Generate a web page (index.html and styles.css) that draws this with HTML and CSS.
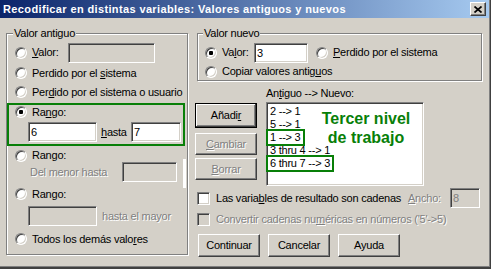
FILE: index.html
```html
<!DOCTYPE html>
<html lang="es">
<head>
<meta charset="utf-8">
<title>Recodificar en distintas variables</title>
<link rel="stylesheet" href="styles.css">
</head>
<body>
<div class="window">
  <div class="titlebar">
    <span class="title">Recodificar en distintas variables: Valores antiguos y nuevos</span>
    <span class="close"><svg width="8" height="7" viewBox="0 0 8 7"><path d="M0.5 0.5 L7.5 6.5 M7.5 0.5 L0.5 6.5" stroke="#000" stroke-width="1.7" fill="none"/></svg></span>
  </div>
  <div class="client">
    <div class="group old">
      <div class="legend">Valor antiguo</div>
      <div class="row r-valor"><span class="radio"></span><span class="lbl w36"><u>V</u>alor:</span><span class="tb dis w87"></span></div>
      <div class="row r-sys"><span class="radio"></span><span class="lbl">Perdido por el <u>s</u>istema</span></div>
      <div class="row r-usr"><span class="radio"></span><span class="lbl">Per<u>d</u>ido por el sistema o usuario</span></div>
      <div class="hl-box">
        <div class="row r-rango"><span class="radio on"></span><span class="lbl">Ra<u>n</u>go:</span></div>
        <div class="row r-range-in"><span class="tb w69 ml19">6</span><span class="hasta"><u>h</u>asta</span><span class="tb w50">7</span></div>
      </div>
      <div class="row r-rango2"><span class="radio"></span><span class="lbl">Rango:</span></div>
      <div class="row r-menor"><span class="dis-text menor">Del menor hasta</span><span class="tb dis w55"></span><span class="scrollmark"></span></div>
      <div class="row r-rango3"><span class="radio"></span><span class="lbl">Ran<u>g</u>o:</span></div>
      <div class="row r-mayor"><span class="tb dis w69 ml21"></span><span class="dis-text mayor">hasta el mayor</span></div>
      <div class="row r-todos"><span class="radio"></span><span class="lbl">Todos los demás valo<u>r</u>es</span></div>
    </div>
    <div class="right">
      <div class="group new">
        <div class="legend">Valor nuevo</div>
        <div class="row n-valor"><span class="radio on"></span><span class="lbl w32">Va<u>l</u>or:</span><span class="tb w54">3</span><span class="radio ml8"></span><span class="lbl"><u>P</u>erdido por el sistema</span></div>
        <div class="row n-copy"><span class="radio"></span><span class="lbl">Copiar valores antig<u>u</u>os</span></div>
      </div>
      <div class="mid">
        <div class="btncol">
          <button class="btn default">Añadi<u>r</u></button>
          <button class="btn dis b-cambiar"><u>C</u>ambiar</button>
          <button class="btn dis b-borrar"><u>B</u>orrar</button>
        </div>
        <div class="listcol">
          <div class="list-label">An<u>t</u>iguo --&gt; Nuevo:</div>
          <div class="listbox">
            <div class="item"><span>2 --&gt; 1</span></div>
            <div class="item"><span>5 --&gt; 1</span></div>
            <div class="item"><span class="boxed">1 --&gt; 3</span></div>
            <div class="item"><span>3 thru 4 --&gt; 1</span></div>
            <div class="item"><span class="boxed">6 thru 7 --&gt; 3</span></div>
            <div class="note">Tercer nivel<br>de trabajo</div>
          </div>
        </div>
      </div>
      <div class="row chk1">
        <span class="chk"></span><span class="lbl6">Las varia<u>b</u>les de resultado son cadenas</span>
        <span class="dis-text ancho"><u>A</u>ncho:</span><span class="tb dis w30">8</span>
      </div>
      <div class="row chk2">
        <span class="chk dis"></span><span class="lbl6 dis-text">Convertir cadenas nu<u>m</u>éricas en números ('5'-&gt;5)</span>
      </div>
      <div class="row bottom">
        <button class="btn">Continuar</button>
        <button class="btn">Cancelar</button>
        <button class="btn">Ayuda</button>
      </div>
    </div>
  </div>
</div>
</body>
</html>
```
FILE: styles.css
```css
* { box-sizing: border-box; }
html, body { margin: 0; padding: 0; }
body {
  width: 491px;
  height: 269px;
  overflow: hidden;
  background: #D4D0C8;
  font: 11px "Liberation Sans", Arial, sans-serif;
  letter-spacing: -0.23px;
  color: #000;
}
u { text-decoration: underline; text-underline-offset: 1px; }

.window {
  width: 491px;
  height: 269px;
  background: #D4D0C8;
  box-shadow: inset -1px 0 0 #404040, inset 0 -2px 0 #404040, inset -2px -3px 0 #808080;
}

.titlebar {
  width: 489px;
  height: 18px;
  display: flex;
  align-items: center;
  justify-content: space-between;
  padding: 0 3px 0 3px;
  background: linear-gradient(to right, #0A246A, #A6CAF0);
}
.title {
  color: #fff;
  font-weight: bold;
  letter-spacing: 0.37px;
  line-height: 18px;
  margin-top: -1px;
  white-space: nowrap;
}
.close {
  width: 16px;
  height: 14px;
  display: flex;
  align-items: center;
  justify-content: center;
  background: #D4D0C8;
  border: 1px solid;
  border-color: #fff #404040 #404040 #fff;
  box-shadow: inset -1px -1px 0 #808080;
  padding-right: 1px;
}
.close svg { display: block; }

.client {
  display: flex;
  align-items: flex-start;
  padding: 15px 0 0 6px;
}

.group {
  border: 1px solid #808080;
  box-shadow: 1px 1px 0 #fff, inset 1px 1px 0 #fff;
}
.legend {
  display: table;
  background: #D4D0C8;
  line-height: 13px;
  padding: 0 1px;
  margin: -7px 0 0 6px;
}
.new .legend { margin-left: 5px; }

.row { display: flex; align-items: center; }
.lbl { margin-left: 5px; white-space: nowrap; line-height: 13px; }
.lbl6 { margin-left: 6px; white-space: nowrap; line-height: 13px; }

.radio {
  flex: none;
  position: relative;
  width: 12px;
  height: 12px;
  border-radius: 50%;
  border: 1px solid;
  border-color: #808080 #fff #fff #808080;
  box-shadow: inset 1px 1px 0 #404040, inset -1px -1px 0 #D4D0C8;
  background: #fff;
}
.radio.on::after {
  content: "";
  position: absolute;
  left: 3px;
  top: 3px;
  width: 4px;
  height: 4px;
  border-radius: 1px;
  background: #000;
}

.chk {
  flex: none;
  width: 13px;
  height: 13px;
  margin-left: 2px;
  border: 1px solid;
  border-color: #808080 #fff #fff #808080;
  box-shadow: inset 1px 1px 0 #404040, inset -1px -1px 0 #D4D0C8;
  background: #fff;
}
.chk.dis { background: #D4D0C8; }

.tb {
  flex: none;
  height: 20px;
  border: 1px solid;
  border-color: #808080 #fff #fff #808080;
  box-shadow: inset 1px 1px 0 #404040, inset -1px -1px 0 #D4D0C8;
  background: #fff;
  padding: 1px 0 0 2px;
  line-height: 16px;
  white-space: nowrap;
}
.tb.dis { background: #D4D0C8; color: #808080; }
.w30 { width: 30px; }
.w32 { width: 32px; }
.w36 { width: 36px; }
.w50 { width: 50px; }
.w54 { width: 54px; }
.w55 { width: 55px; }
.w69 { width: 69px; }
.w87 { width: 87px; }
.ml8 { margin-left: 8px; }
.ml19 { margin-left: 19px; }
.ml21 { margin-left: 21px; }

.dis-text { color: #808080; text-shadow: 1px 1px 0 #fff; white-space: nowrap; line-height: 13px; }

/* Left group */
.old { width: 182px; height: 222px; flex: none; }
.old .row > .radio:first-child { margin-left: 8px; }
.r-valor { margin-top: 2px; height: 21px; }
.r-sys { height: 20px; }
.r-usr { height: 18px; }
.hl-box {
  margin-top: 2px;
  width: 178px;
  height: 43px;
  border: 2px solid #087f08;
}
.old .hl-box .radio:first-child { margin-left: 6px; }
.r-rango { height: 14px; }
.r-range-in { margin-top: 3px; height: 20px; }
.hasta { width: 30px; margin-left: 4px; line-height: 13px; }
.r-rango2 { margin-top: 3px; height: 13px; }
.r-menor { height: 20px; }
.menor { margin-left: 23px; width: 92px; }
.scrollmark {
  flex: none;
  align-self: flex-start;
  width: 3px;
  height: 29px;
  margin: -3px 0 0 6px;
  background: #fff;
}
.r-rango3 { height: 24px; }
.r-mayor { height: 20px; }
.mayor { margin-left: 5px; }
.r-todos { height: 26px; }

/* Right column */
.right { width: 288px; margin-left: 7px; flex: none; }
.new { width: 285px; height: 48px; margin-left: 2px; }
.new .row > .radio:first-child { margin-left: 7px; }
.n-valor { margin-top: 2px; height: 21px; }
.n-copy { height: 17px; }

.mid { display: flex; align-items: flex-start; }
.btncol { width: 62px; flex: none; padding-top: 22px; display: flex; flex-direction: column; }
.listcol { margin-left: 9px; padding-top: 6px; }
.list-label { line-height: 13px; white-space: nowrap; }

.btn {
  display: block;
  width: 62px;
  height: 22px;
  padding: 0;
  margin: 0;
  font: inherit;
  letter-spacing: inherit;
  color: #000;
  background: #D4D0C8;
  border: 1px solid;
  border-color: #fff #404040 #404040 #fff;
  box-shadow: inset -1px -1px 0 #808080;
  line-height: 13px;
  text-align: center;
}
.btn.default {
  height: 25px;
  border: 1px solid #000;
  box-shadow: inset -1px -1px 0 #404040, inset 1px 1px 0 #fff, inset -2px -2px 0 #808080;
}
.btn.dis { color: #808080; text-shadow: 1px 1px 0 #fff; }
.b-cambiar { margin-top: 5px; }
.b-borrar { margin-top: 3px; }

.listbox {
  position: relative;
  margin-top: 2px;
  width: 158px;
  height: 84px;
  background: #fff;
  border: 1px solid;
  border-color: #808080 #fff #fff #808080;
  box-shadow: inset 1px 1px 0 #404040, inset -1px -1px 0 #D4D0C8;
  padding: 2px 0 0 1px;
}
.item { height: 13px; line-height: 13px; white-space: nowrap; }
.item span { display: inline-block; height: 13px; padding: 0 2px; }
.item .boxed { outline: 2px solid #087f08; }
.note {
  position: absolute;
  left: 49px;
  top: 6px;
  width: 100px;
  text-align: center;
  font-weight: bold;
  font-size: 16px;
  line-height: 19px;
  letter-spacing: 0;
  color: #087f08;
}

.chk1 { margin-top: 2px; height: 20px; }
.ancho { margin-left: auto; width: 42px; }
.chk1 .tb { margin-right: 3px; }
.chk2 { height: 22px; }
.bottom { margin-top: 4px; height: 23px; padding-left: 3px; gap: 8px; }
.bottom .btn { height: 23px; }
```
